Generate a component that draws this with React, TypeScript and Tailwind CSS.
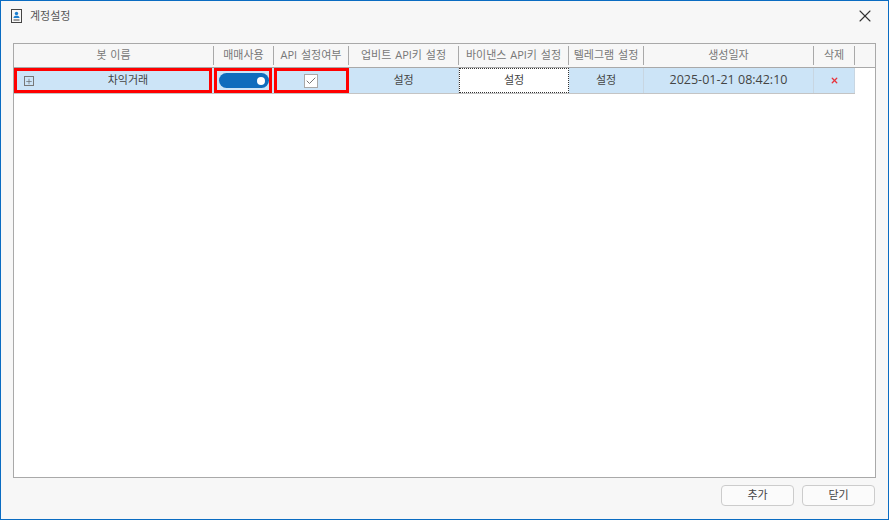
import { Plus, X, Check } from 'lucide-react'

const columns = [
  { label: '봇 이름', width: 'w-[200px]' },
  { label: '매매사용', width: 'w-[60px]' },
  { label: 'API 설정여부', width: 'w-[75px]' },
  { label: '업비트 API키 설정', width: 'w-[110px]' },
  { label: '바이낸스 API키 설정', width: 'w-[110px]' },
  { label: '텔레그램 설정', width: 'w-[75px]' },
  { label: '생성일자', width: 'w-[170px]' },
  { label: '삭제', width: 'w-[41px]' },
]

const font = "font-['Open_Sans','Noto_Sans_CJK_KR',sans-serif]"

const SettingCell = ({ width }: { width: string }) => (
  <div className={`${width} flex items-center justify-center pb-[1px] border-r border-[#c8d6e2] text-[11px] text-[#444444]`}>
    설정
  </div>
)

export default function App() {
  return (
    <div className={`w-[889px] h-[520px] flex flex-col bg-[#f7f7f7] border border-[#0a6cc2] ${font}`}>
      {/* title bar */}
      <div className="h-[42px] shrink-0 flex items-center pl-[10px] pr-[13px] pb-[12px]">
        <svg width="12" height="15" viewBox="0 0 12 15" className="shrink-0">
          <rect x="0.5" y="0.5" width="10" height="13" fill="#f7f7f7" stroke="#444444" />
          <circle cx="5.5" cy="4.5" r="1.7" fill="#1c7fd0" />
          <path d="M2.5 9c0-1.6 1.2-2.2 3-2.2s3 .6 3 2.2z" fill="#1c7fd0" />
          <path d="M2.5 11h6" stroke="#444444" />
        </svg>
        <span className="ml-[7px] text-[11px] text-[#555555]">계정설정</span>
        <X className="ml-auto text-[#333333]" size={20} strokeWidth={1.3} />
      </div>

      {/* grid */}
      <div className="mx-[12px] h-[435px] shrink-0 bg-white border border-[#a9a9a9] flex flex-col">
        <div className="h-[24px] shrink-0 flex items-center bg-[#f7f7f7] border-b border-[#a9a9a9]">
          {columns.map((col) => (
            <div
              key={col.label}
              className={`${col.width} h-[19px] flex items-center justify-center pb-[1px] whitespace-nowrap border-r border-[#a9a9a9] text-[11px] text-[#777777] [word-spacing:1px]`}
            >
              {col.label}
            </div>
          ))}
        </div>

        <div className="w-[841px] h-[26px] flex bg-[#cce4f7] border-b border-[#c4c4c4]">
          <div className="w-[198px] mr-[2px] relative flex items-center justify-center pl-[30px] pb-[1px] border-[3px] border-[#ff0000] text-[11px] text-[#444444]">
            <span className="absolute left-[7px] top-[5px] w-[10px] h-[10px] flex items-center justify-center border border-[#777777]">
              <Plus size={9} strokeWidth={1.8} className="text-[#555555]" />
            </span>
            차익거래
          </div>
          <div className="w-[58px] mr-[2px] flex items-center justify-center border-[3px] border-[#ff0000]">
            <div className="w-[50px] h-[15px] ml-[2px] rounded-full bg-[#0f6cbd] flex items-center justify-end pr-[4px]">
              <span className="w-[8px] h-[8px] rounded-full bg-white" />
            </div>
          </div>
          <div className="w-[75px] flex items-center justify-center border-[3px] border-[#ff0000]">
            <span className="w-[14px] h-[14px] mr-[2px] flex items-center justify-center bg-white border border-[#a9a9a9]">
              <Check size={12} strokeWidth={2} className="text-[#777777]" />
            </span>
          </div>
          <SettingCell width="w-[110px]" />
          <div className="w-[110px] flex items-center justify-center pb-[1px] bg-white border border-dotted border-[#333333] text-[11px] text-[#444444]">
            설정
          </div>
          <SettingCell width="w-[75px]" />
          <div className="w-[170px] flex items-center justify-center pb-[1px] border-r border-[#c8d6e2] text-[12.5px] text-[#444444]">
            2025-01-21 08:42:10
          </div>
          <div className="w-[41px] flex items-center justify-center border-r border-[#c8d6e2]">
            <X size={9} strokeWidth={3.5} className="text-[#e8343c]" />
          </div>
        </div>
      </div>

      {/* footer buttons */}
      <div className="flex justify-end gap-[8px] pt-[7px] pr-[13px]">
        <button className="w-[73px] h-[21px] flex items-center justify-center rounded-[4px] bg-[#fbfbfb] border border-[#cccccc] text-[11px] text-[#444444]">
          추가
        </button>
        <button className="w-[73px] h-[21px] flex items-center justify-center rounded-[4px] bg-[#fbfbfb] border border-[#cccccc] text-[11px] text-[#444444]">
          닫기
        </button>
      </div>
    </div>
  )
}
